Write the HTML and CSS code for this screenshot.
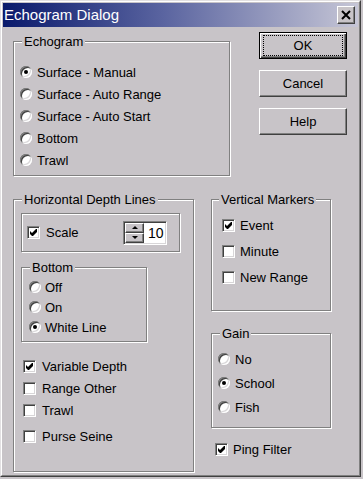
FILE: index.html
```html
<!DOCTYPE html>
<html>
<head>
<meta charset="utf-8">
<title>Echogram Dialog</title>
<link rel="stylesheet" href="styles.css">
</head>
<body>
<div class="window">
  <div class="frame">
    <div class="titlebar">
      <span class="title">Echogram Dialog</span>
      <span class="close"><svg width="10" height="10" viewBox="0 0 10 10"><path d="M1 1 L9 9 M9 1 L1 9" stroke="#000" stroke-width="2" fill="none"/></svg></span>
    </div>
    <div class="body">
      <div class="row top">
        <fieldset class="group echogram">
          <legend>Echogram</legend>
          <div class="opt"><span class="radio on"></span>Surface - Manual</div>
          <div class="opt"><span class="radio"></span>Surface - Auto Range</div>
          <div class="opt"><span class="radio"></span>Surface - Auto Start</div>
          <div class="opt"><span class="radio"></span>Bottom</div>
          <div class="opt"><span class="radio"></span>Trawl</div>
        </fieldset>
        <div class="buttons">
          <div class="btn default"><span class="focus">OK</span></div>
          <div class="btn">Cancel</div>
          <div class="btn">Help</div>
        </div>
      </div>
      <div class="row bottom">
        <fieldset class="group hdl">
          <legend>Horizontal Depth Lines</legend>
          <div class="scalebox">
            <div class="opt"><span class="check"><svg width="9" height="9" viewBox="0 0 9 9"><polygon points="1,3 3,5 7,1 8,1 8,4 4,8 3,8 1,6" fill="#000"/></svg></span>Scale</div>
            <div class="spinner">
              <div class="spin-btns"><span class="spin up"></span><span class="spin down"></span></div>
              <div class="edit">10</div>
            </div>
          </div>
          <fieldset class="group bottomgrp">
            <legend>Bottom</legend>
            <div class="opt"><span class="radio"></span>Off</div>
            <div class="opt"><span class="radio"></span>On</div>
            <div class="opt"><span class="radio on"></span>White Line</div>
          </fieldset>
          <div class="checks">
            <div class="opt"><span class="check"><svg width="9" height="9" viewBox="0 0 9 9"><polygon points="1,3 3,5 7,1 8,1 8,4 4,8 3,8 1,6" fill="#000"/></svg></span>Variable Depth</div>
            <div class="opt"><span class="check"></span>Range Other</div>
            <div class="opt"><span class="check"></span>Trawl</div>
            <div class="opt purse"><span class="check"></span>Purse Seine</div>
          </div>
        </fieldset>
        <div class="rightcol">
          <fieldset class="group vm">
            <legend>Vertical Markers</legend>
            <div class="opt"><span class="check"><svg width="9" height="9" viewBox="0 0 9 9"><polygon points="1,3 3,5 7,1 8,1 8,4 4,8 3,8 1,6" fill="#000"/></svg></span>Event</div>
            <div class="opt"><span class="check"></span>Minute</div>
            <div class="opt"><span class="check"></span>New Range</div>
          </fieldset>
          <fieldset class="group gain">
            <legend>Gain</legend>
            <div class="opt"><span class="radio"></span>No</div>
            <div class="opt"><span class="radio on"></span>School</div>
            <div class="opt"><span class="radio"></span>Fish</div>
          </fieldset>
          <div class="opt ping"><span class="check"><svg width="9" height="9" viewBox="0 0 9 9"><polygon points="1,3 3,5 7,1 8,1 8,4 4,8 3,8 1,6" fill="#000"/></svg></span>Ping Filter</div>
        </div>
      </div>
    </div>
  </div>
</div>
</body>
</html>
```
FILE: styles.css
```css
html, body {
  margin: 0;
  padding: 0;
  background: #c8c4c8;
}
body {
  font: 13px/15px "Liberation Sans", Arial, sans-serif;
  color: #000;
}
.window {
  width: 361px;
  height: 477px;
  box-sizing: border-box;
  border: 1px solid;
  border-color: #e2e0e2 #404040 #404040 #e2e0e2;
  background: #c8c4c8;
}
.frame {
  height: 100%;
  box-sizing: border-box;
  border: 1px solid;
  border-color: #fff #808080 #808080 #fff;
  padding: 1px;
}
.titlebar {
  height: 24px;
  display: flex;
  align-items: center;
  background: linear-gradient(90deg, #0a1a6c 0%, #5a64a0 45%, #c6c6d6 100%);
  color: #fff;
  font-size: 15px;
  line-height: 18px;
  padding-left: 1px;
}
.close {
  margin-left: auto;
  margin-right: 3px;
  width: 18px;
  height: 18px;
  box-sizing: border-box;
  border: 1px solid;
  border-color: #fff #404040 #404040 #fff;
  box-shadow: inset -1px -1px 0 #808080;
  background: #c8c4c8;
  display: flex;
  align-items: center;
  justify-content: center;
}
.body {
  padding-left: 10px;
}
.row {
  display: flex;
  align-items: flex-start;
}
.group {
  margin: 0;
  min-width: 0;
  box-sizing: border-box;
  border: 1px solid #808080;
  box-shadow: inset 1px 1px 0 #fff, 1px 1px 0 #fff;
}
legend {
  padding: 0 2px;
  background: #c8c4c8;
  line-height: 15px;
}
.opt {
  display: flex;
  align-items: center;
  gap: 5px;
  white-space: nowrap;
}
.radio {
  flex: none;
  width: 12px;
  height: 12px;
  border-radius: 50%;
  background: #fff;
  box-shadow: inset 1px 1px 0 #808080, inset -1px -1px 0 #fff, inset 2px 2px 0 #404040, inset -2px -2px 0 #d8d6d8;
  display: flex;
  align-items: center;
  justify-content: center;
}
.radio.on::after {
  content: "";
  width: 4px;
  height: 4px;
  border-radius: 50%;
  background: #000;
}
.check {
  flex: none;
  width: 13px;
  height: 13px;
  box-sizing: border-box;
  padding: 1px;
  background: #fff;
  border: 1px solid;
  border-color: #808080 #fff #fff #808080;
  box-shadow: inset 1px 1px 0 #404040, inset -1px -1px 0 #d8d6d8;
  display: flex;
}
.check svg {
  display: block;
}

/* Echogram group */
.group.echogram {
  width: 217px;
  margin-top: 7px;
  padding: 12px 0 4px 6px;
}
.echogram legend {
  margin-left: 2px;
}
.echogram .opt {
  height: 22px;
}

/* Buttons */
.buttons {
  display: flex;
  flex-direction: column;
  gap: 11px;
  margin: 5px 0 0 29px;
}
.btn {
  width: 88px;
  height: 27px;
  box-sizing: border-box;
  border: 1px solid;
  border-color: #fff #404040 #404040 #fff;
  box-shadow: inset -1px -1px 0 #808080;
  display: flex;
  align-items: center;
  justify-content: center;
}
.btn.default {
  border: 1px solid #000;
  box-shadow: inset 1px 1px 0 #fff, inset -1px -1px 0 #404040, inset -2px -2px 0 #808080;
  align-items: stretch;
}
.focus {
  flex: 1;
  margin: 2px 3px;
  border: 1px dotted #000;
  display: flex;
  align-items: center;
  justify-content: center;
}

/* Bottom row */
.bottom {
  margin-top: 16px;
}
.group.hdl {
  width: 181px;
  padding: 6px 0 24px 7px;
}
.hdl legend {
  margin-left: 1px;
}
.scalebox {
  width: 159px;
  height: 39px;
  box-sizing: border-box;
  border: 1px solid #808080;
  box-shadow: inset 1px 1px 0 #fff, 1px 1px 0 #fff;
  display: flex;
  align-items: center;
  padding: 0 12px 0 5px;
}
.scalebox .opt {
  gap: 6px;
}
.spinner {
  margin-left: auto;
  width: 44px;
  height: 24px;
  box-sizing: border-box;
  border: 1px solid;
  border-color: #808080 #fff #fff #808080;
  box-shadow: inset 1px 1px 0 #404040, inset -1px -1px 0 #d8d6d8;
  padding: 1px;
  display: flex;
}
.spin-btns {
  width: 19px;
  display: flex;
  flex-direction: column;
}
.spin {
  flex: 1;
  box-sizing: border-box;
  border: 1px solid;
  border-color: #fff #404040 #404040 #fff;
  box-shadow: inset -1px -1px 0 #808080;
  background: #c8c4c8;
  display: flex;
  align-items: center;
  justify-content: center;
}
.spin.up::after {
  content: "";
  border-left: 3px solid transparent;
  border-right: 3px solid transparent;
  border-bottom: 3px solid #000;
}
.spin.down::after {
  content: "";
  border-left: 3px solid transparent;
  border-right: 3px solid transparent;
  border-top: 3px solid #000;
}
.edit {
  flex: 1;
  background: #fff;
  padding-left: 4px;
  line-height: 20px;
  font-size: 14px;
}
.group.bottomgrp {
  width: 126px;
  margin-top: 8px;
  padding: 2px 0 4px 7px;
}
.bottomgrp legend {
  margin-left: 1px;
}
.bottomgrp .opt {
  height: 20px;
  gap: 4px;
}
.checks {
  margin: 13px 0 0 2px;
}
.checks .opt {
  height: 22px;
  gap: 6px;
}
.checks .purse {
  margin-top: 4px;
}
.rightcol {
  margin-left: 17px;
  width: 120px;
  display: flex;
  flex-direction: column;
}
.group.vm {
  width: 120px;
  padding: 5px 0 20px 10px;
}
.vm legend {
  margin-left: -3px;
}
.vm .opt {
  height: 26px;
}
.group.gain {
  width: 120px;
  margin-top: 15px;
  padding: 6px 0 8px 6px;
}
.gain legend {
  margin-left: 2px;
}
.gain .opt {
  height: 24px;
}
.ping {
  margin: 10px 0 0 4px;
  height: 22px;
}
```
